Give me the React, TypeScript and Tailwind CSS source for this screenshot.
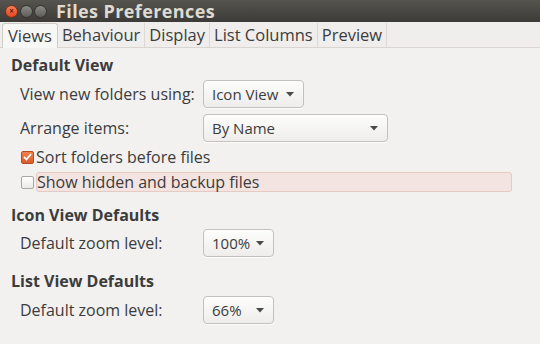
import { useState } from "react";

function Dropdown({ value, width }: { value: string; width: string }) {
    return (
        <div className={`${width} h-[28px] flex items-center justify-between pl-[8px] pr-[9px] border border-[#c4c1bc] rounded-[4px] bg-gradient-to-b from-[#fdfdfc] to-[#eeedeb] shadow-[0_1px_0_rgba(255,255,255,0.8)] text-[15px] text-[#3c3c3c]`}>
            <span>{value}</span>
            <svg width="8" height="5" viewBox="0 0 8 5">
                <path d="M0 0h8L4 4.5z" fill="#4a4a4a" />
            </svg>
        </div>
    );
}

function Row({ label, children }: { label: string; children: React.ReactNode }) {
    return (
        <div className="h-[30px] flex items-center pl-[20px]">
            <div className="w-[183px]">{label}</div>
            {children}
        </div>
    );
}

export default function App() {
    const [sortFolders, setSortFolders] = useState(true);
    const [showHidden, setShowHidden] = useState(false);

    const tabs = ["Views", "Behaviour", "Display", "List Columns", "Preview"];

    return (
        <div className="w-[540px] h-[344px] overflow-hidden bg-[#f2f1f0] text-[16px] text-[#3c3c3c] font-['Open_Sans','Noto_Sans',sans-serif]">
            {/* title bar */}
            <div className="h-[22px] flex items-center bg-gradient-to-b from-[#55544f] to-[#3c3b37]">
                <div className="flex items-center gap-[1px] pl-[5px]">
                    <div className="w-[13px] h-[13px] rounded-full bg-gradient-to-b from-[#f77d56] to-[#e0461b] border border-[#7a2e17] flex items-center justify-center text-[8px] leading-none text-[#5a1a08] font-bold">×</div>
                    <div className="w-[13px] h-[13px] rounded-full bg-gradient-to-b from-[#8b8a86] to-[#5e5d59] border border-[#33322f] ml-[1px]" />
                    <div className="w-[13px] h-[13px] rounded-full bg-gradient-to-b from-[#8b8a86] to-[#5e5d59] border border-[#33322f]" />
                </div>
                <div className="ml-[9px] text-[18px] tracking-[0.4px] font-bold text-[#dfdbd2] leading-none">Files Preferences</div>
            </div>

            {/* tabs */}
            <div className="h-[26px] flex items-end pl-[2px] border-b border-[#d9d6d2] bg-[#efeeec]">
                {tabs.map((t, i) => (
                    <div
                        key={t}
                        className={
                            i === 0
                                ? "h-[25px] px-[5px] flex items-center text-[16.5px] bg-[#f7f7f6] border border-b-0 border-[#cfccc7] rounded-t-[3px] -mb-px"
                                : "h-[24px] px-[4px] flex items-center text-[16.5px] border-r border-[#dcd9d5]"
                        }
                    >
                        {t}
                    </div>
                ))}
            </div>

            {/* content */}
            <div className="flex flex-col">
                <div className="h-[24px] mt-[5px] flex items-center pl-[11px] font-bold">Default View</div>
                <div className="mt-[2px]">
                    <Row label="View new folders using:">
                        <Dropdown value="Icon View" width="w-[101px]" />
                    </Row>
                </div>
                <div className="mt-[4px]">
                    <Row label="Arrange items:">
                        <Dropdown value="By Name" width="w-[185px]" />
                    </Row>
                </div>

                <div className="h-[20px] mt-[4px] flex items-center pl-[21px]" onClick={() => setSortFolders(!sortFolders)}>
                    <div className={sortFolders
                        ? "w-[13px] h-[13px] rounded-[2px] border border-[#b24d24] bg-gradient-to-b from-[#f0814f] to-[#dc5a26] flex items-center justify-center"
                        : "w-[13px] h-[13px] rounded-[2px] border border-[#aaa7a2] bg-gradient-to-b from-white to-[#ebeae8]"}>
                        {sortFolders && (
                            <svg width="9" height="8" viewBox="0 0 9 8">
                                <path d="M1 4l2.5 2.5L8 1" stroke="#fff" strokeWidth="1.8" fill="none" />
                            </svg>
                        )}
                    </div>
                    <span className="ml-[2px]">Sort folders before files</span>
                </div>

                <div className="h-[20px] mt-[5px] flex items-center pl-[21px]" onClick={() => setShowHidden(!showHidden)}>
                    <div className={showHidden
                        ? "w-[13px] h-[13px] rounded-[2px] border border-[#b24d24] bg-gradient-to-b from-[#f0814f] to-[#dc5a26]"
                        : "w-[13px] h-[13px] rounded-[2px] border border-[#aaa7a2] bg-gradient-to-b from-white to-[#ebeae8]"} />
                    <div className="ml-[2px] w-[476px] h-[20px] flex items-center pl-0 bg-[#f3e4e1] border border-[#e6cbc3] rounded-[3px]">
                        Show hidden and backup files
                    </div>
                </div>

                <div className="h-[24px] mt-[11px] flex items-center pl-[11px] font-bold">Icon View Defaults</div>
                <div className="mt-[1px]">
                    <Row label="Default zoom level:">
                        <Dropdown value="100%" width="w-[71px]" />
                    </Row>
                </div>

                <div className="h-[24px] mt-[11px] flex items-center pl-[11px] font-bold">List View Defaults</div>
                <div className="mt-[2px]">
                    <Row label="Default zoom level:">
                        <Dropdown value="66%" width="w-[71px]" />
                    </Row>
                </div>
            </div>
        </div>
    );
}
